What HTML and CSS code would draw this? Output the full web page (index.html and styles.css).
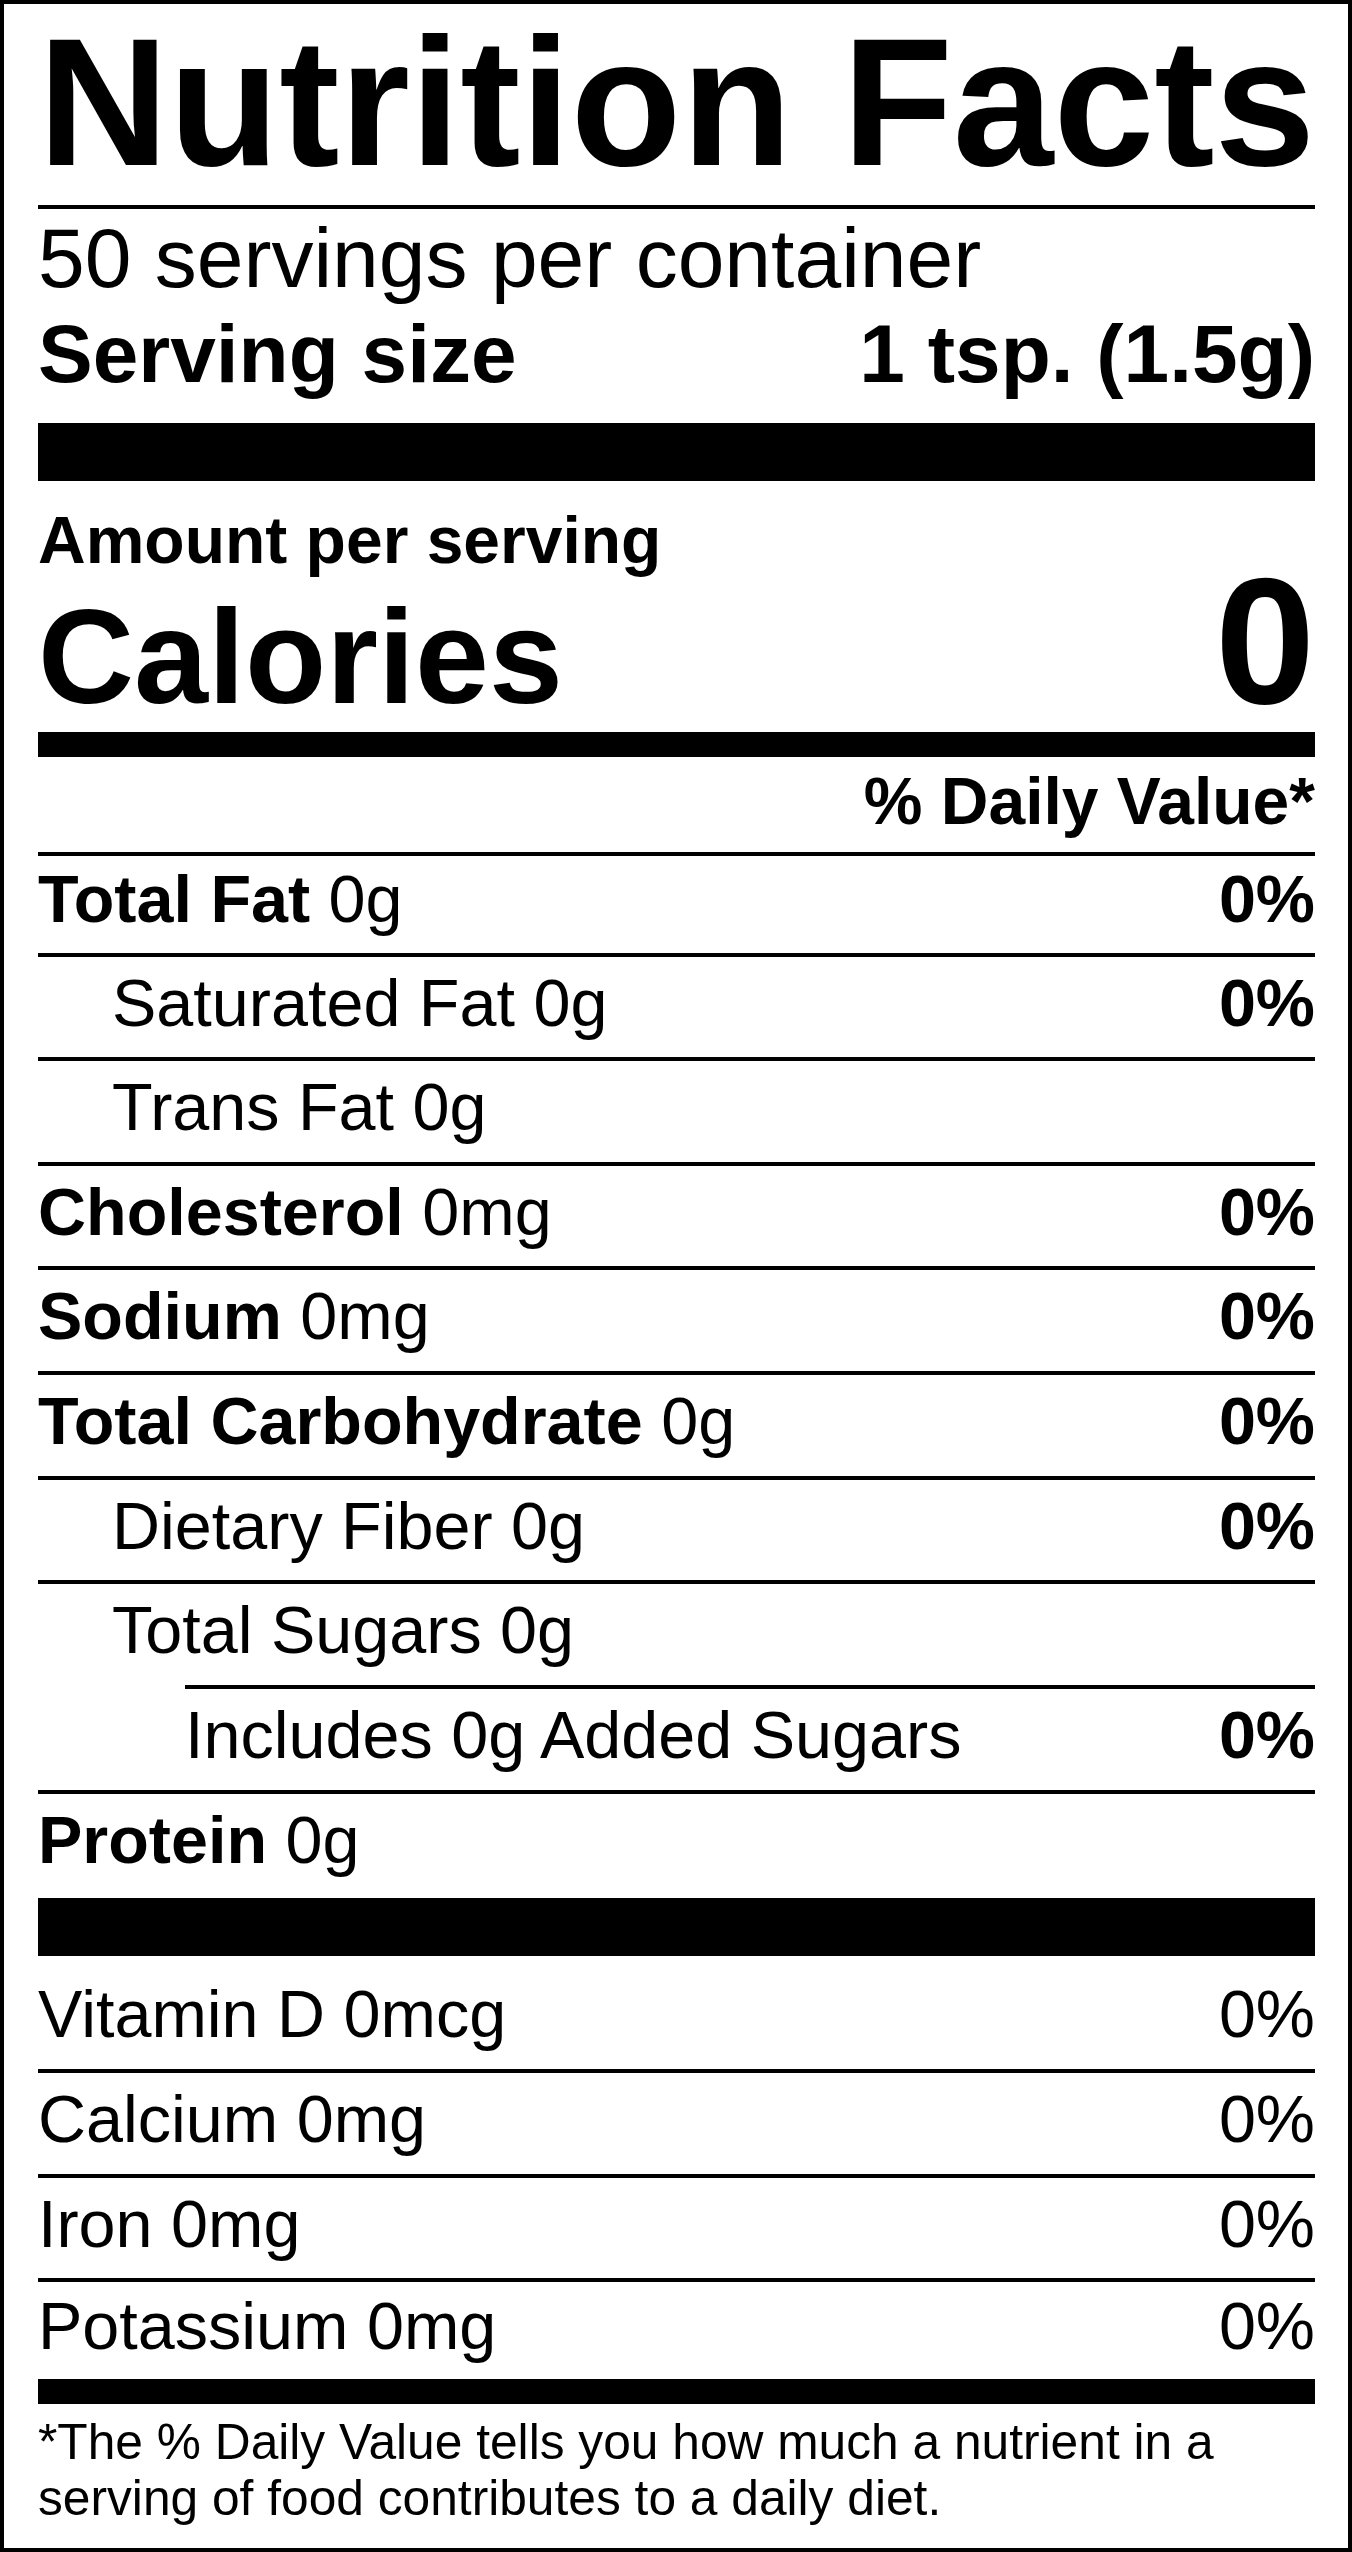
FILE: index.html
```html
<!DOCTYPE html>
<html>
    <head>
        <title>Nutrition Facts</title>
        <link rel="stylesheet" href="styles.css">
    </head>
    <body>
        <div class="label">
            <h1 class="title">Nutrition Facts</h1>
            <div class="servings">
                <p>50 servings per container</p>
                <p class="serving-size"><span>Serving size</span><span>1 tsp. (1.5g)</span></p>
            </div>
            <div class="bar bar-thick"></div>
            <p class="amount">Amount per serving</p>
            <p class="calories"><span>Calories</span><span class="calories-value">0</span></p>
            <div class="bar bar-medium"></div>

            <div class="row row-head">% Daily Value*</div>
            <div class="row row-first"><span><b>Total Fat</b> 0g</span><b>0%</b></div>
            <div class="row indent"><span>Saturated Fat 0g</span><b>0%</b></div>
            <div class="row indent"><span>Trans Fat 0g</span></div>
            <div class="row"><span><b>Cholesterol</b> 0mg</span><b>0%</b></div>
            <div class="row"><span><b>Sodium</b> 0mg</span><b>0%</b></div>
            <div class="row"><span><b>Total Carbohydrate</b> 0g</span><b>0%</b></div>
            <div class="row indent"><span>Dietary Fiber 0g</span><b>0%</b></div>
            <div class="row indent"><span>Total Sugars 0g</span></div>
            <div class="row indent-2"><span>Includes 0g Added Sugars</span><b>0%</b></div>
            <div class="row row-protein"><span><b>Protein</b> 0g</span></div>
            <div class="bar bar-thick"></div>

            <div class="row row-top"><span>Vitamin D 0mcg</span><span>0%</span></div>
            <div class="row"><span>Calcium 0mg</span><span>0%</span></div>
            <div class="row"><span>Iron 0mg</span><span>0%</span></div>
            <div class="row row-last"><span>Potassium 0mg</span><span>0%</span></div>
            <div class="bar bar-medium"></div>

            <p class="footnote">*The % Daily Value tells you how much a nutrient in a serving of food contributes to a daily diet.</p>
        </div>
    </body>
</html>
```
FILE: styles.css
```css
body {
    margin: 0px;
    background: #fff;
}

.label {
    box-sizing: border-box;
    width: 1352px;
    border: 4px solid #000;
    padding: 0 33px 22px 34px;
    font-family: "Liberation Sans", Arial, sans-serif;
    color: #000;
}

.label p {
    margin: 0;
}

.title {
    margin: 0;
    padding-bottom: 4px;
    border-bottom: 4px solid #000;
    font-size: 181px;
    line-height: 197px;
    font-weight: 700;
    white-space: nowrap;
}

.servings {
    padding: 2px 0 22px;
    font-size: 84px;
    line-height: 95px;
}

.serving-size {
    display: flex;
    justify-content: space-between;
    font-size: 82px;
    font-weight: 700;
}

.bar {
    background: #000;
}

.bar-thick {
    height: 58px;
}

.bar-medium {
    height: 25px;
}

.amount {
    padding-top: 21px;
    font-size: 66px;
    line-height: 76px;
    font-weight: 700;
}

.label .calories {
    margin-bottom: 12px;
    display: flex;
    justify-content: space-between;
    align-items: baseline;
    font-size: 133px;
    line-height: 125px;
    font-weight: 700;
}

.calories-value {
    font-size: 180px;
}

/* nutrient rows */
.row {
    display: flex;
    justify-content: space-between;
    font-size: 66.5px;
    line-height: 92px;
    padding-bottom: 8.66px;
}

.row + .row {
    border-top: 4px solid #000;
}

.row b {
    font-weight: 700;
}

.row-head {
    justify-content: flex-end;
    font-size: 66px;
    font-weight: 700;
    line-height: 88px;
    padding-bottom: 7px;
}

.row-first {
    line-height: 86px;
    padding-bottom: 10.5px;
}

.indent {
    padding-left: 74px;
}

.indent-2 {
    margin-left: 147px;
}

.row-protein {
    padding-bottom: 12.5px;
}

.row-top {
    padding-top: 12px;
}

.row-last {
    line-height: 88px;
    padding-bottom: 9px;
}

.footnote {
    padding-top: 10px;
    font-size: 49.7px;
    line-height: 56px;
}
```
